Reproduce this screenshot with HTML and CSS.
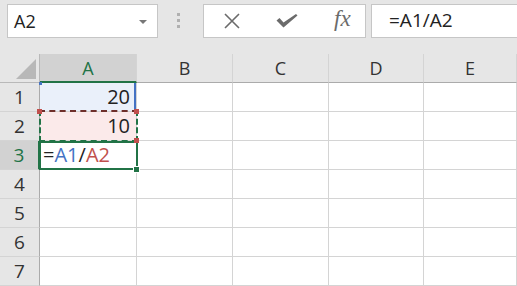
FILE: index.html
```html
<!DOCTYPE html>
<html lang="en">
<head>
    <meta charset="UTF-8">
    <title>Sheet1</title>
    <link rel="stylesheet" href="styles.css">
</head>
<body>
    <div class="toolbar">
        <div class="name-box">
            <span>A2</span>
            <span class="drop"></span>
        </div>
        <div class="grip"><i></i><i></i><i></i></div>
        <div class="buttons">
            <svg class="btn" width="18" height="18" viewBox="0 0 18 18">
                <path d="M2 2 L16 16 M16 2 L2 16" stroke="#6b6b6b" stroke-width="1.6" fill="none"/>
            </svg>
            <svg class="btn" width="22" height="14" viewBox="0 0 22 14">
                <path d="M0.5 6.5 L7.5 13.5 L21.5 1.5 L20 0 L7.5 8.5 L3.5 4 Z" fill="#6b6b6b"/>
            </svg>
            <span class="fx">fx</span>
        </div>
        <div class="formula">=A1/A2</div>
    </div>

    <div class="sheet">
        <div class="corner"><span class="tri"></span></div>
        <div class="col-head current">A</div>
        <div class="col-head">B</div>
        <div class="col-head">C</div>
        <div class="col-head">D</div>
        <div class="col-head">E</div>

        <div class="row-head">1</div>
        <div class="cell num ref-blue">20</div>
        <div class="cell"></div><div class="cell"></div><div class="cell"></div><div class="cell"></div>

        <div class="row-head">2</div>
        <div class="cell num ref-red">10</div>
        <div class="cell"></div><div class="cell"></div><div class="cell"></div><div class="cell"></div>

        <div class="row-head current">3</div>
        <div class="cell active">=<span class="blue">A1</span>/<span class="red">A2</span></div>
        <div class="cell"></div><div class="cell"></div><div class="cell"></div><div class="cell"></div>

        <div class="row-head">4</div>
        <div class="cell"></div><div class="cell"></div><div class="cell"></div><div class="cell"></div><div class="cell"></div>

        <div class="row-head">5</div>
        <div class="cell"></div><div class="cell"></div><div class="cell"></div><div class="cell"></div><div class="cell"></div>

        <div class="row-head">6</div>
        <div class="cell"></div><div class="cell"></div><div class="cell"></div><div class="cell"></div><div class="cell"></div>

        <div class="row-head">7</div>
        <div class="cell"></div><div class="cell"></div><div class="cell"></div><div class="cell"></div><div class="cell"></div>
    </div>
</body>
</html>
```

FILE: styles.css
```css
body {
    margin: 0;
    width: 517px;
    height: 286px;
    overflow: hidden;
    background-color: #e6e6e6;
    font-family: "Open Sans", "Liberation Sans", sans-serif;
    color: #222;
}

/* formula bar row */
.toolbar {
    height: 54px;
    display: flex;
    align-items: flex-start;
    padding-top: 4px;
    box-sizing: border-box;
}

.name-box {
    margin-left: 7px;
    width: 151px;
    height: 34px;
    box-sizing: border-box;
    background: white;
    border: 1px solid #c6c6c6;
    display: flex;
    align-items: center;
    justify-content: space-between;
    padding: 0 10px 0 6px;
    font-size: 18px;
}

.drop {
    width: 0;
    height: 0;
    border-left: 4px solid transparent;
    border-right: 4px solid transparent;
    border-top: 4px solid #777;
    margin-top: 1px;
}

.grip {
    width: 4px;
    margin: 9px 22px 0 19px;
    display: flex;
    flex-direction: column;
    gap: 3px;
}

.grip i {
    display: block;
    width: 3px;
    height: 3px;
    background: #b0b0b0;
}

.buttons {
    width: 163px;
    height: 34px;
    box-sizing: border-box;
    background: white;
    border: 1px solid #c6c6c6;
    display: flex;
    align-items: center;
    padding-left: 19px;
}

.btn {
    margin-right: 35px;
}

.btn + .btn {
    margin-right: 36px;
}

.fx {
    font-family: "Liberation Serif", serif;
    font-style: italic;
    font-size: 23px;
    color: #6b6b6b;
    margin-top: -4px;
}

.formula {
    flex: 1;
    margin-left: 5px;
    height: 34px;
    box-sizing: border-box;
    background: white;
    border: 1px solid #c6c6c6;
    border-right: none;
    padding-left: 17px;
    font-size: 19px;
    line-height: 31px;
}

/* grid */
.sheet {
    display: grid;
    grid-template-columns: 40px 97px 96px 96px 95px 1fr;
    grid-auto-rows: 29px;
    background: white;
}

.sheet > div {
    box-sizing: border-box;
    border-right: 1px solid #d4d4d4;
    border-bottom: 1px solid #d4d4d4;
    position: relative;
}

.corner {
    background: #e6e6e6;
    border-right-color: #b9b9b9 !important;
    border-bottom-color: #b9b9b9 !important;
}

.tri {
    position: absolute;
    right: 3px;
    bottom: 3px;
    width: 0;
    height: 0;
    border-left: 20px solid transparent;
    border-bottom: 20px solid #b8b8b8;
}

.col-head {
    background: #e6e6e6;
    text-align: center;
    font-size: 18px;
    line-height: 29px;
    color: #333;
    border-bottom-color: #ababab !important;
}

.row-head {
    background: #e6e6e6;
    text-align: center;
    font-size: 19px;
    line-height: 28px;
    color: #333;
    border-right-color: #ababab !important;
}

.col-head.current {
    background: #d2d2d2;
    color: #217346;
    border-bottom: 2px solid #217346 !important;
    line-height: 28px;
}

.row-head.current {
    background: #d2d2d2;
    color: #217346;
    border-right: 2px solid #217346 !important;
}

.cell {
    font-size: 20px;
    line-height: 28px;
    padding: 0 3px;
}

.num {
    text-align: right;
    padding-right: 6px;
}

/* referenced ranges */
.ref-blue {
    background: #eaf0fa;
    box-shadow: inset -2px 0 0 #4472c4;
}

.ref-blue::before {
    content: "";
    position: absolute;
    left: -1px;
    top: -1px;
    width: 3px;
    height: 3px;
    background: #4472c4;
}

.ref-red {
    background: #fbeaea;
}

.ref-red::after {
    content: "";
    position: absolute;
    left: -1px;
    right: -2px;
    top: -2px;
    bottom: -2px;
    border: 2px dashed #217346;
    border-top-color: #6e2f2a;
}

.ref-red::before {
    content: "";
    position: absolute;
    right: -3px;
    top: -3px;
    width: 5px;
    height: 5px;
    background: #c0504d;
    z-index: 2;
    box-shadow: -97px 0 0 #c0504d, 0 29px 0 #c0504d;
}

.active::after {
    content: "";
    position: absolute;
    left: -1px;
    right: -2px;
    top: 0;
    bottom: -1px;
    border: 2px solid #217346;
}

.active::before {
    content: "";
    position: absolute;
    right: -4px;
    bottom: -4px;
    width: 5px;
    height: 5px;
    background: #217346;
    border: 1px solid white;
    z-index: 2;
}

.blue {
    color: #4472c4;
}

.red {
    color: #c0504d;
}
```
